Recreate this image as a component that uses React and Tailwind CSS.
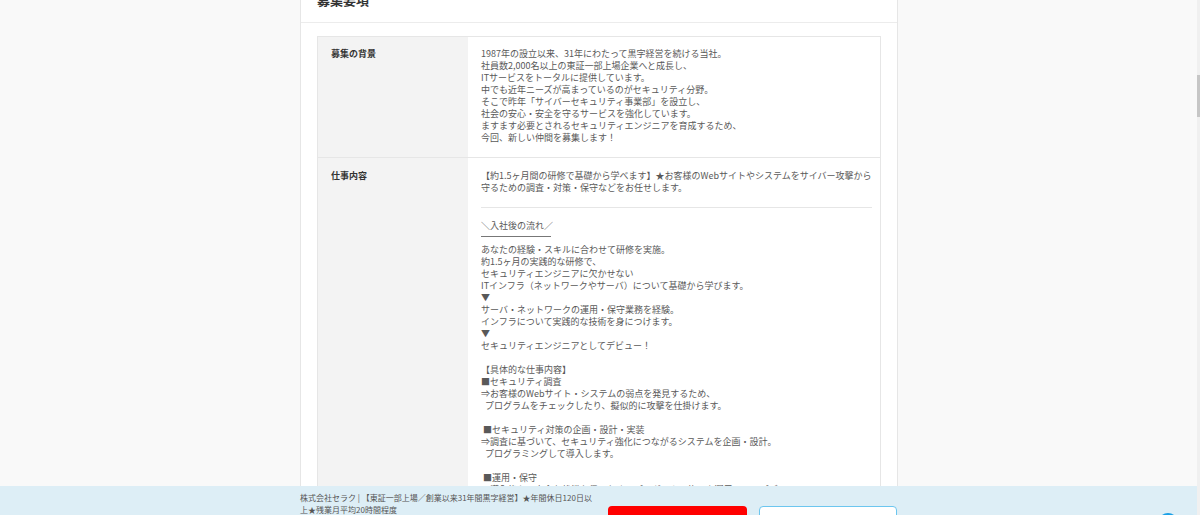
import React from "react";

const bgLines = [
  "1987年の設立以来、31年にわたって黒字経営を続ける当社。",
  "社員数2,000名以上の東証一部上場企業へと成長し、",
  "ITサービスをトータルに提供しています。",
  "中でも近年ニーズが高まっているのがセキュリティ分野。",
  "そこで昨年「サイバーセキュリティ事業部」を設立し、",
  "社会の安心・安全を守るサービスを強化しています。",
  "ますます必要とされるセキュリティエンジニアを育成するため、",
  "今回、新しい仲間を募集します！",
];

const flowLines = [
  "あなたの経験・スキルに合わせて研修を実施。",
  "約1.5ヶ月の実践的な研修で、",
  "セキュリティエンジニアに欠かせない",
  "ITインフラ（ネットワークやサーバ）について基礎から学びます。",
  "▼",
  "サーバ・ネットワークの運用・保守業務を経験。",
  "インフラについて実践的な技術を身につけます。",
  "▼",
  "セキュリティエンジニアとしてデビュー！",
  "",
  "【具体的な仕事内容】",
  "■セキュリティ調査",
  "⇒お客様のWebサイト・システムの弱点を発見するため、",
  "\u00a0\u00a0プログラムをチェックしたり、擬似的に攻撃を仕掛けます。",
  "",
  "\u00a0■セキュリティ対策の企画・設計・実装",
  "⇒調査に基づいて、セキュリティ強化につながるシステムを企画・設計。",
  "\u00a0\u00a0プログラミングして導入します。",
  "",
  "\u00a0■運用・保守",
  "⇒導入後も、安全な状態を保つため、プログラムの修正や運用・アップデート。",
  "\u00a0\u00a0継続的にお客様のシステムを守ります。",
];

function Lines({ lines }) {
  return (
    <div>
      {lines.map((l, i) => (
        <div key={i} className="h-[12px] whitespace-pre leading-[12px]">
          {l}
        </div>
      ))}
    </div>
  );
}

export default function App() {
  return (
    <div className="relative h-[515px] w-[1200px] overflow-hidden bg-[#f9f9f9] font-['Noto_Sans_CJK_JP','Noto_Sans',sans-serif]">
      {/* main content (page scrolled) */}
      <div className="-mt-[21px] ml-[300px] w-[598px] border border-[#e6e6e6] bg-white">
        <div className="border-b border-[#ececec] pb-[16px] pl-[16px] pt-[13px]">
          <h2 className="text-[13px] font-bold leading-[13px] text-[#333]">募集要項</h2>
        </div>
        <div className="px-[16px] pt-[13px]">
          <div className="border border-[#e6e6e6]">
            {/* row 1 */}
            <div className="flex border-b border-[#e6e6e6]">
              <div className="w-[150px] shrink-0 bg-[#f3f3f3] px-[13px] pb-[13px] pt-[11px] text-[9px] font-bold leading-[12px] text-[#333]">
                募集の背景
              </div>
              <div className="flex-1 px-[13px] pb-[13px] pt-[11px] text-[9px] text-[#595959]">
                <Lines lines={bgLines} />
              </div>
            </div>
            {/* row 2 */}
            <div className="flex">
              <div className="w-[150px] shrink-0 bg-[#f3f3f3] px-[13px] pt-[12px] text-[9px] font-bold leading-[12px] text-[#333]">
                仕事内容
              </div>
              <div className="flex-1 px-[13px] pb-[40px] pt-[12px] text-[9px] text-[#595959]">
                <Lines
                  lines={[
                    "【約1.5ヶ月間の研修で基礎から学べます】★お客様のWebサイトやシステムをサイバー攻撃から",
                    "守るための調査・対策・保守などをお任せします。",
                  ]}
                />
                <div className="mb-[12px] mt-[13px] h-px bg-[#e6e6e6]" />
                <div className="h-[12px] leading-[12px]">＼入社後の流れ／</div>
                <div className="h-[12px] pt-[4px]">
                  <div className="h-px w-[70px] bg-[#777]" />
                </div>
                <Lines lines={flowLines} />
              </div>
            </div>
          </div>
        </div>
      </div>

      {/* fixed bottom bar */}
      <div className="absolute bottom-0 left-0 h-[29px] w-[1197px] bg-[#ddeef6]">
        <div className="ml-[300px] flex items-start">
          <div className="w-[290px] shrink-0 whitespace-nowrap pt-[6px] text-[8px] leading-[12px] text-[#555]">
            株式会社セラク | 【東証一部上場／創業以来31年間黒字経営】★年間休日120日以
            <br />
            上★残業月平均20時間程度
          </div>
          <div className="ml-[18px] mt-[20px] h-[40px] w-[139px] shrink-0 rounded-[4px] bg-[#ff0000]" />
          <div className="ml-[12px] mt-[20px] h-[40px] w-[138px] shrink-0 rounded-[4px] border border-[#6cc6ef] bg-white" />
        </div>
        <div className="absolute left-[1158px] top-[27px] h-[20px] w-[20px] rounded-full bg-[#1aa0e6]" />
      </div>

      {/* scrollbar */}
      <div className="absolute right-0 top-0 h-full w-[3px] bg-[#f0f0f0]">
        <div className="mt-[75px] h-[42px] w-full bg-[#c6c6c6]" />
      </div>
    </div>
  );
}
